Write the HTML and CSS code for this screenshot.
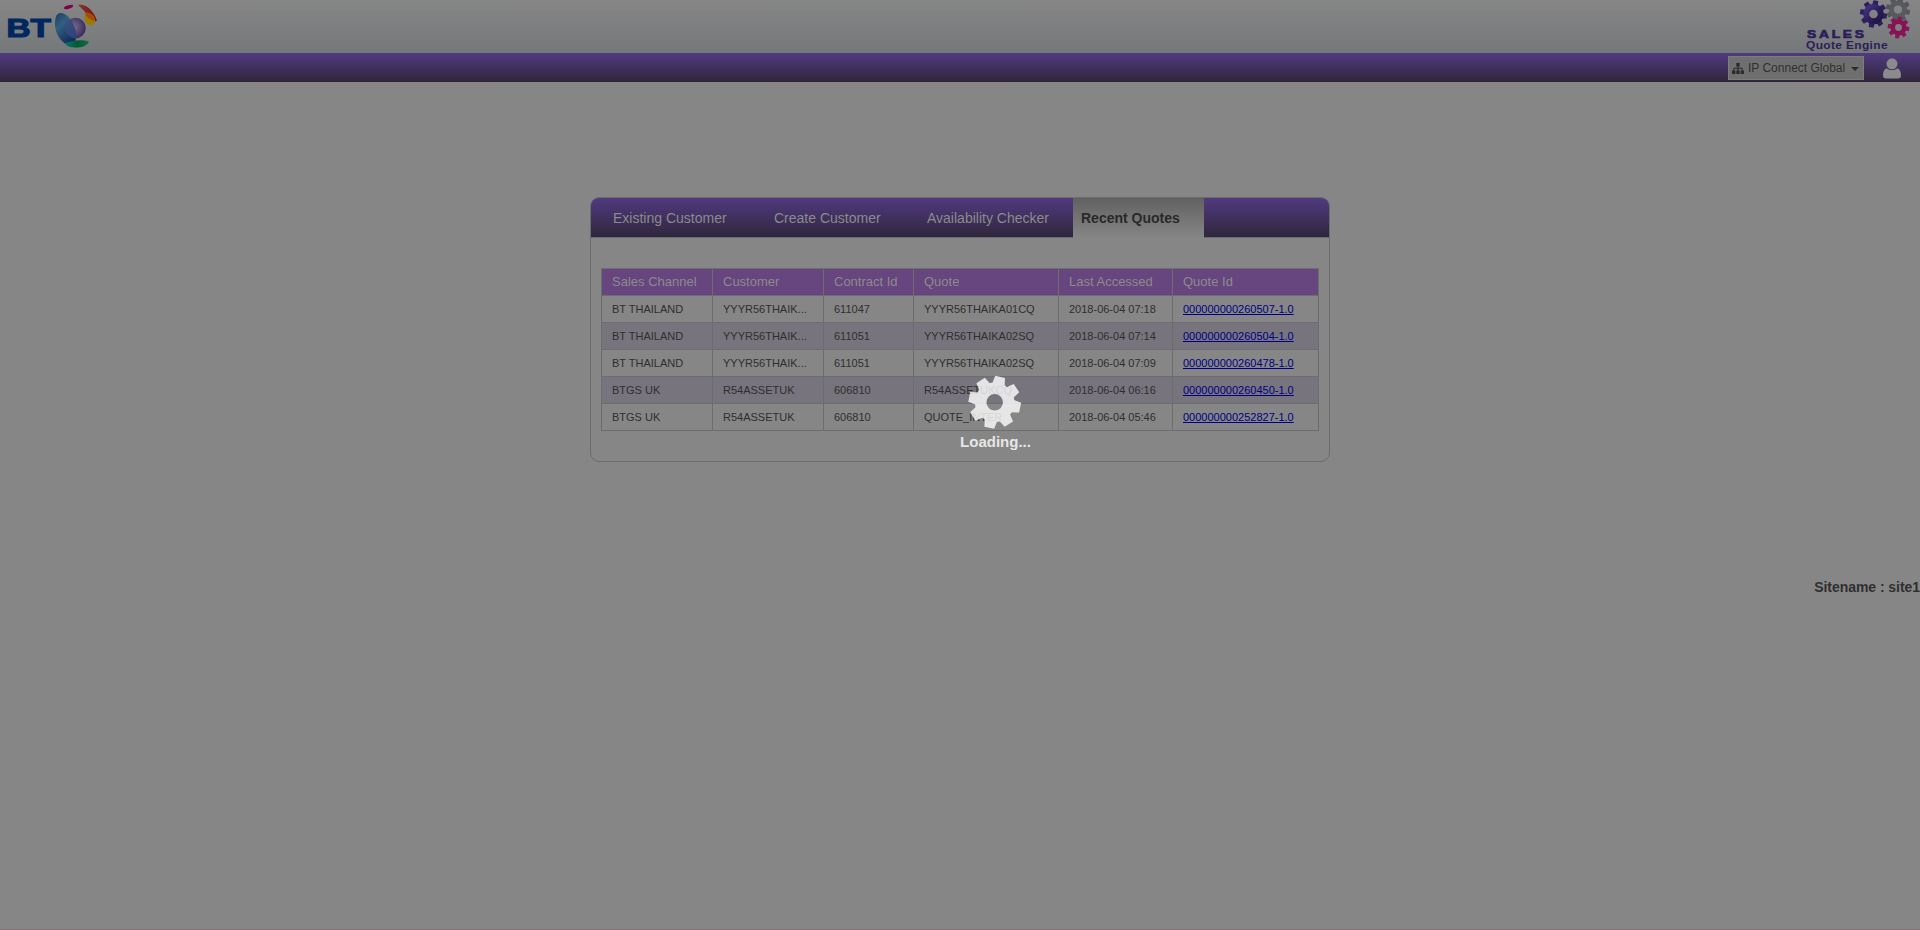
FILE: index.html
```html
<!DOCTYPE html>
<html lang="en">
<head>
<meta charset="utf-8">
<title>Sales Quote Engine</title>
<link rel="stylesheet" href="styles.css">
</head>
<body>
<header class="header">
  <svg class="bt-logo" width="100" height="50" viewBox="0 0 100 50">
    <defs>
      <linearGradient id="blue" x1="0" y1="0" x2=".6" y2="1"><stop offset="0" stop-color="#1b3c63"/><stop offset=".4" stop-color="#335f80"/><stop offset="1" stop-color="#102b57"/></linearGradient>
      <radialGradient id="violet" cx=".4" cy=".45" r=".6"><stop offset="0" stop-color="#77708f"/><stop offset="1" stop-color="#3b2a5e"/></radialGradient>
      <linearGradient id="green"><stop offset="0" stop-color="#127070"/><stop offset=".5" stop-color="#005a38"/><stop offset="1" stop-color="#176b3c"/></linearGradient>
      <linearGradient id="red"><stop offset="0" stop-color="#7f3730"/><stop offset="1" stop-color="#85100f"/></linearGradient>
      <clipPath id="globe"><path d="M60 13C67 12 76 24 76 36C76 42 74 45 70 45C63 45 55 35 55 24C55 18 56 14 60 13z"/></clipPath>
    </defs>
    <text class="bt-text" x="6.500" y="37" textLength="44.500" lengthAdjust="spacingAndGlyphs">BT</text>
    <circle cx="75.500" cy="28" r="10.300" fill="url(#violet)"/>
    <path d="M60 13C67 12 76 24 76 36C76 42 74 45 70 45C63 45 55 35 55 24C55 18 56 14 60 13z" fill="url(#blue)"/>
    <circle cx="75.500" cy="28" r="10.300" fill="#3f4a82" opacity=".7" clip-path="url(#globe)"/>
    <ellipse cx="68.500" cy="7" rx="4.800" ry="1.700" transform="rotate(-16 68.500 7)" fill="#85004b"/>
    <path d="M78 5c7-2 16 5 19 16c-6 1-9-3-12-9c-2-3-5-5-7-7z" fill="url(#red)"/>
    <path d="M86 13c4-1 9 3 9 8c0 4-3 5-6 4c-5-2-6-9-3-12z" fill="#9c7b05"/>
    <path d="M88 13q5 1 7 8q-6-1-10-7z" fill="#a44a08"/>
    <path d="M65 43.500c7-4 18-4 24-2c-2 5-8 6-13 6c-6 0-9-1-11-4z" fill="url(#green)"/>
  </svg>
  <svg class="sqe-logo" width="120" height="53" viewBox="1800 0 120 53">
    <defs>
      <linearGradient id="gp" x1="0" y1="0" x2="1" y2="1"><stop offset="0" stop-color="#443184"/><stop offset=".5" stop-color="#2d1f5d"/><stop offset="1" stop-color="#211442"/></linearGradient>
      <path id="tooth" d="M-3 -7L-2.400 -13.500L2.400 -13.500L3 -7z"/>
    </defs>
    <g transform="translate(1898 9.500)">
      <g transform="rotate(15) scale(.9)" fill="#555559">
        <use href="#tooth"/><use href="#tooth" transform="rotate(45)"/><use href="#tooth" transform="rotate(90)"/><use href="#tooth" transform="rotate(135)"/><use href="#tooth" transform="rotate(180)"/><use href="#tooth" transform="rotate(225)"/><use href="#tooth" transform="rotate(270)"/><use href="#tooth" transform="rotate(315)"/>
      </g>
      <circle r="6.600" fill="none" stroke="#595a5f" stroke-width="5"/>
    </g>
    <g transform="translate(1873.500 14)">
      <g transform="rotate(10)" fill="#2d1f5d">
        <use href="#tooth"/><use href="#tooth" transform="rotate(45)"/><use href="#tooth" transform="rotate(90)"/><use href="#tooth" transform="rotate(135)"/><use href="#tooth" transform="rotate(180)"/><use href="#tooth" transform="rotate(225)"/><use href="#tooth" transform="rotate(270)"/><use href="#tooth" transform="rotate(315)"/>
      </g>
      <circle r="7.300" fill="none" stroke="url(#gp)" stroke-width="6"/>
    </g>
    <g transform="translate(1898.500 27.500)">
      <g transform="rotate(8) scale(.8)" fill="#88175a">
        <use href="#tooth"/><use href="#tooth" transform="rotate(45)"/><use href="#tooth" transform="rotate(90)"/><use href="#tooth" transform="rotate(135)"/><use href="#tooth" transform="rotate(180)"/><use href="#tooth" transform="rotate(225)"/><use href="#tooth" transform="rotate(270)"/><use href="#tooth" transform="rotate(315)"/>
      </g>
      <circle r="5.700" fill="none" stroke="#861253" stroke-width="4.500"/>
    </g>
    <text class="sales" transform="translate(1807 38) scale(1.2 1)" textLength="47.500" lengthAdjust="spacing">SALES</text>
    <text class="engine" transform="translate(1806 48.500) scale(1.200 1)" textLength="68" lengthAdjust="spacing">Quote Engine</text>
  </svg>
</header>
<nav class="bar">
  <div class="product">
    <svg width="12" height="11" viewBox="0 0 12 11"><path d="M4.300 0h3.400v3.400H6.600v1.400h4v2.800H12V11H8.600V7.600h1V5.800h-3v1.800h1.100V11H4.300V7.600h1.100V5.800h-3v1.800h1V11H0V7.600h1.400V4.800h4V3.400H4.300z" fill="#2b2b2b"/></svg>
    <span class="product-name">IP Connect Global</span>
    <i class="caret"></i>
  </div>
  <svg class="user" width="18" height="21" viewBox="0 0 18 21"><path d="M3.500 10.200C1 11 0 14 0 17.500C0 19.500 1 20.500 3 20.500H15c2 0 3-1 3-3C18 14 17 11 14.500 10.200C13 11.500 11 12 9 12S5 11.500 3.500 10.200z" fill="#8b8b8c"/><circle cx="9" cy="5.800" r="5.500" fill="#8b8b8c"/></svg>
</nav>
<main class="panel">
  <div class="tabs">
    <div class="tab t1">Existing Customer</div>
    <div class="tab t2">Create Customer</div>
    <div class="tab t3">Availability Checker</div>
    <div class="tab active">Recent Quotes</div>
  </div>
  <table class="quotes">
    <colgroup><col class="c1"><col class="c1"><col class="c3"><col class="c4"><col class="c5"><col class="c6"></colgroup>
    <thead><tr><th>Sales Channel</th><th>Customer</th><th>Contract Id</th><th>Quote</th><th>Last Accessed</th><th>Quote Id</th></tr></thead>
    <tbody>
      <tr><td>BT THAILAND</td><td>YYYR56THAIK...</td><td>611047</td><td>YYYR56THAIKA01CQ</td><td>2018-06-04 07:18</td><td><a href="#">000000000260507-1.0</a></td></tr>
      <tr><td>BT THAILAND</td><td>YYYR56THAIK...</td><td>611051</td><td>YYYR56THAIKA02SQ</td><td>2018-06-04 07:14</td><td><a href="#">000000000260504-1.0</a></td></tr>
      <tr><td>BT THAILAND</td><td>YYYR56THAIK...</td><td>611051</td><td>YYYR56THAIKA02SQ</td><td>2018-06-04 07:09</td><td><a href="#">000000000260478-1.0</a></td></tr>
      <tr><td>BTGS UK</td><td>R54ASSETUK</td><td>606810</td><td>R54ASSETUKCQ</td><td>2018-06-04 06:16</td><td><a href="#">000000000260450-1.0</a></td></tr>
      <tr><td>BTGS UK</td><td>R54ASSETUK</td><td>606810</td><td>QUOTE_INTER</td><td>2018-06-04 05:46</td><td><a href="#">000000000252827-1.0</a></td></tr>
    </tbody>
  </table>
</main>
<div class="sitename">Sitename : site1</div>
<div class="loading">
  <svg width="54" height="54" viewBox="-26.700 -27.300 54 54">
    <defs><path id="cog" d="M-6.500 -17L-5 -26L5 -26L6.500 -17z"/></defs>
    <g transform="rotate(12)" fill="#fff">
      <use href="#cog"/><use href="#cog" transform="rotate(45)"/><use href="#cog" transform="rotate(90)"/><use href="#cog" transform="rotate(135)"/><use href="#cog" transform="rotate(180)"/><use href="#cog" transform="rotate(225)"/><use href="#cog" transform="rotate(270)"/><use href="#cog" transform="rotate(315)"/>
    </g>
    <circle r="14" fill="none" stroke="#fff" stroke-width="11.500"/>
  </svg>
  <span>Loading...</span>
</div>
</body>
</html>
```
FILE: styles.css
```css
* { box-sizing: border-box; }
body {
  margin: 0;
  height: 930px;
  overflow: hidden;
  background: #868686;
  border-bottom: 1px solid #806f74;
  font-family: "Liberation Sans", Arial, sans-serif;
  color: #2f2f2f;
}
.header {
  height: 53px;
  display: flex;
  justify-content: space-between;
  background: linear-gradient(#868686, #75787a);
}
.bt-text { font: bold 26px "Liberation Sans", Arial, sans-serif; fill: #00285f; stroke: #00285f; stroke-width: 1.2px; }
.sales { font: bold 11.5px "Liberation Sans", Arial, sans-serif; fill: #2c1e59; stroke: #2c1e59; stroke-width: .7px; }
.engine { font: bold 10px "Liberation Sans", Arial, sans-serif; fill: #2c1e59; }
.bar {
  height: 29px;
  display: flex;
  justify-content: flex-end;
  background: linear-gradient(#503a80, #30263b);
}
.product {
  display: flex;
  align-items: center;
  width: 136px;
  height: 24px;
  margin: 3px 19px 0 0;
  padding-left: 3px;
  border: 1px solid #7c7c7c;
  background: #6f6f6f;
  font-size: 12px;
}
.product-name { width: 98px; margin-left: 4px; white-space: nowrap; }
.caret { margin: 2px 0 0 5px; border: 4px solid transparent; border-top-color: #2b2b2b; border-bottom: 0; }
.user { margin: 5px 19px 0 0; }
.panel {
  width: 740px;
  height: 265px;
  margin: 115px auto 0;
  border: 1px solid #6b6b6e;
  border-radius: 9px;
  overflow: hidden;
}
.tabs {
  display: flex;
  height: 40px;
  border-bottom: 1px solid #6b6b6e;
  background: linear-gradient(#503a80, #30263b);
}
.tab { height: 39px; line-height: 40px; font-size: 14px; color: #8b8b8c; white-space: nowrap; }
.t1 { width: 161px; margin-left: 22px; }
.t2 { width: 153px; }
.t3 { width: 146px; }
.tab.active {
  width: 131px;
  height: 40px;
  padding-left: 8px;
  background: linear-gradient(#616161, #868686);
  color: #292929;
  font-weight: bold;
}
.quotes { width: 718px; margin: 30px 0 0 10px; border-collapse: collapse; table-layout: fixed; }
.c1 { width: 111px; }
.c3 { width: 90px; }
.c4 { width: 145px; }
.c5 { width: 114px; }
.c6 { width: 146px; }
th, td {
  height: 27px;
  padding: 0 0 0 10px;
  border: 1px solid #6d6d70;
  text-align: left;
  white-space: nowrap;
  font-size: 11px;
}
th { padding-bottom: 2px; background: #67457f; color: #8b8b8c; font-size: 13px; font-weight: normal; }
tbody tr:nth-child(even) { background: #78747d; }
a { color: #000086; text-decoration: underline; }
.sitename { margin-top: 117px; text-align: right; font-size: 14px; line-height: 16px; font-weight: bold; letter-spacing: -.05px; }
.loading {
  position: absolute;
  left: 935px;
  top: 375px;
  width: 121px;
  text-align: center;
  opacity: .8;
  color: #fff;
  font-size: 15px;
  font-weight: bold;
}
.loading svg { display: block; margin: 0 33px 4px; }
```
